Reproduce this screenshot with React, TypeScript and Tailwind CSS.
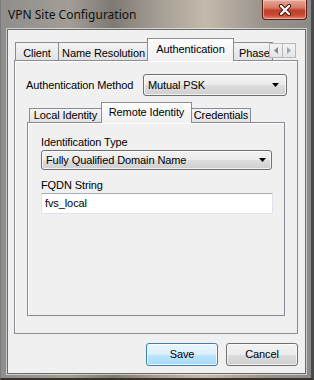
import React from 'react';

/**
 * VPN Site Configuration dialog (Win7 look)
 */

type TabProps = {
  label: string;
  selected?: boolean;
  className?: string;
  size: 'outer' | 'inner';
};

function Tab({ label, selected, className = '', size }: TabProps) {
  if (selected) {
    const h = size === 'outer' ? 'h-[23px] pt-[4px]' : 'h-[21px] pt-[3px]';
    return (
      <div
        className={`relative z-10 -mb-[1px] ${h} border border-b-0 border-[#898c95] bg-[linear-gradient(#fdfdfd,#f0f0f0)] text-center leading-[13px] whitespace-nowrap ${className}`}
      >
        {label}
      </div>
    );
  }
  const h = size === 'outer' ? 'h-[18px] pt-[4px]' : 'h-[14px] pt-[0px]';
  return (
    <div
      className={`${h} border border-b-0 border-[#898c95] bg-[linear-gradient(#f3f3f3,#e2e2e2)] text-center leading-[13px] whitespace-nowrap overflow-hidden ${className}`}
    >
      {label}
    </div>
  );
}

function DropArrow() {
  return (
    <svg width="7" height="4" viewBox="0 0 7 4">
      <path d="M0 0h7L3.5 4z" fill="#000" />
    </svg>
  );
}

function Dropdown({ value, className = '' }: { value: string; className?: string }) {
  return (
    <div
      className={`flex items-center justify-between rounded-[3px] border border-[#707070] bg-[linear-gradient(#f2f2f2_0%,#ebebeb_50%,#dddddd_51%,#cfcfcf_100%)] shadow-[inset_0_0_0_1px_rgba(255,255,255,0.7)] pl-[4px] ${className}`}
    >
      <span className="leading-[13px]">{value}</span>
      <DropArrow />
    </div>
  );
}

function CloseButton() {
  return (
    <div className="w-[45px] h-[20px] flex items-center justify-center rounded-b-[4px] border border-t-0 border-[#5b1f17] bg-[linear-gradient(#e6a99b_0%,#d77a66_40%,#c0412b_55%,#c94a33_80%,#e2866e_100%)] shadow-[inset_0_0_0_1px_rgba(255,210,200,0.55)]">
      <svg width="14" height="12" viewBox="0 0 14 12">
        <path d="M3 2l8 8M11 2l-8 8" stroke="#4a1a12" strokeWidth="4.2" strokeLinecap="round" />
        <path d="M3 2l8 8M11 2l-8 8" stroke="#ffffff" strokeWidth="2.2" strokeLinecap="round" />
      </svg>
    </div>
  );
}

function ScrollArrows() {
  return (
    <div className="absolute right-[2px] top-[5px] flex">
      <div className="w-[14px] h-[15px] flex items-center justify-center border border-[#b8b8b8] bg-[linear-gradient(#f4f4f4,#e4e4e4)]">
        <svg width="4" height="7" viewBox="0 0 4 7">
          <path d="M4 0v7L0 3.5z" fill="#7d8994" />
        </svg>
      </div>
      <div className="w-[14px] h-[15px] -ml-[1px] flex items-center justify-center border border-[#b8b8b8] bg-[linear-gradient(#f4f4f4,#e4e4e4)]">
        <svg width="4" height="7" viewBox="0 0 4 7">
          <path d="M0 0v7L4 3.5z" fill="#9aa6b2" />
        </svg>
      </div>
    </div>
  );
}

export default function App() {
  return (
    <div className="w-[314px] h-[380px] flex flex-col overflow-hidden border-l border-l-[#7a7a7a] border-r-[3px] border-r-[#4a4a4a] border-b-[2px] border-b-[#3b3028] bg-[linear-gradient(90deg,#8f8e8c_0%,#a29d96_22%,#7e7973_36%,#a39c93_50%,#c4baab_66%,#9a948c_84%,#8c8a88_100%)] font-['Liberation_Sans',Arial,sans-serif] text-[11px] tracking-[-0.1px] text-black">
      {/* Title bar */}
      <div className="h-[29px] shrink-0 flex items-start justify-between pl-[7px] pr-[4px]">
        <span className="mt-[6px] font-['Noto_Sans',sans-serif] text-[12px] leading-[17px] tracking-normal text-[#111]">
          VPN Site Configuration
        </span>
        <CloseButton />
      </div>

      {/* Client area */}
      <div className="flex-1 ml-[6px] mr-[5px] mb-[4px] flex flex-col border border-[#6a6a6a] bg-[#f0f0f0] shadow-[0_0_0_1px_rgba(255,255,255,0.55)] pt-[8px] pl-[6px] pr-[7px] pb-[7px]">
        {/* Outer tab control */}
        <div className="relative flex h-[22px] items-end pl-[1px]">
          <Tab size="outer" label="Client" className="w-[44px]" />
          <Tab size="outer" label="Name Resolution" className="w-[91px] -ml-[1px]" />
          <Tab size="outer" label="Authentication" selected className="w-[87px] -ml-[2px]" />
          <Tab size="outer" label="Phase" className="w-[40px] -ml-[1px] text-left pl-[5px]" />
          <ScrollArrows />
        </div>
        <div className="h-[274px] border border-[#898c95] bg-[#f0f0f0] shadow-[inset_1px_1px_0_#fff] pl-[11px] pt-[13px]">
          <div className="flex items-center">
            <span className="w-[117px] leading-[13px]">Authentication Method</span>
            <Dropdown value="Mutual PSK" className="w-[144px] h-[22px] pr-[7px]" />
          </div>

          {/* Inner tab control */}
          <div className="ml-[1px] mr-[12px] mt-[6px]">
            <div className="flex h-[20px] items-end pl-[2px]">
              <Tab size="inner" label="Local Identity" className="w-[73px]" />
              <Tab size="inner" label="Remote Identity" selected className="w-[91px] -ml-[1px]" />
              <Tab size="inner" label="Credentials" className="w-[60px] -ml-[1px]" />
            </div>
            <div className="h-[194px] border border-[#898c95] bg-[#f0f0f0] shadow-[inset_1px_1px_0_#fff] pl-[13px] pt-[13px] flex flex-col">
              <span className="leading-[13px]">Identification Type</span>
              <Dropdown value="Fully Qualified Domain Name" className="mt-[1px] w-[231px] h-[20px] pr-[5px]" />
              <span className="mt-[9px] leading-[13px]">FQDN String</span>
              <div className="mt-[1px] w-[232px] h-[21px] flex items-center border border-[#e2e3ea] border-t-[#abadb3] bg-white pl-[3px] leading-[13px]">
                fvs_local
              </div>
            </div>
          </div>
        </div>

        {/* Buttons */}
        <div className="mt-[9px] flex justify-end gap-[8px] pr-[0px]">
          <button className="w-[72px] h-[23px] rounded-[3px] border border-[#3c7fb1] bg-[linear-gradient(#eaf6fd_0%,#d9f0fc_50%,#bee6fd_51%,#a7d9f5_100%)] shadow-[inset_0_0_0_1px_rgba(255,255,255,0.8)] leading-[13px]">
            Save
          </button>
          <button className="w-[72px] h-[23px] rounded-[3px] border border-[#707070] bg-[linear-gradient(#f2f2f2_0%,#ebebeb_50%,#dddddd_51%,#cfcfcf_100%)] shadow-[inset_0_0_0_1px_rgba(255,255,255,0.7)] leading-[13px]">
            Cancel
          </button>
        </div>
      </div>
    </div>
  );
}
